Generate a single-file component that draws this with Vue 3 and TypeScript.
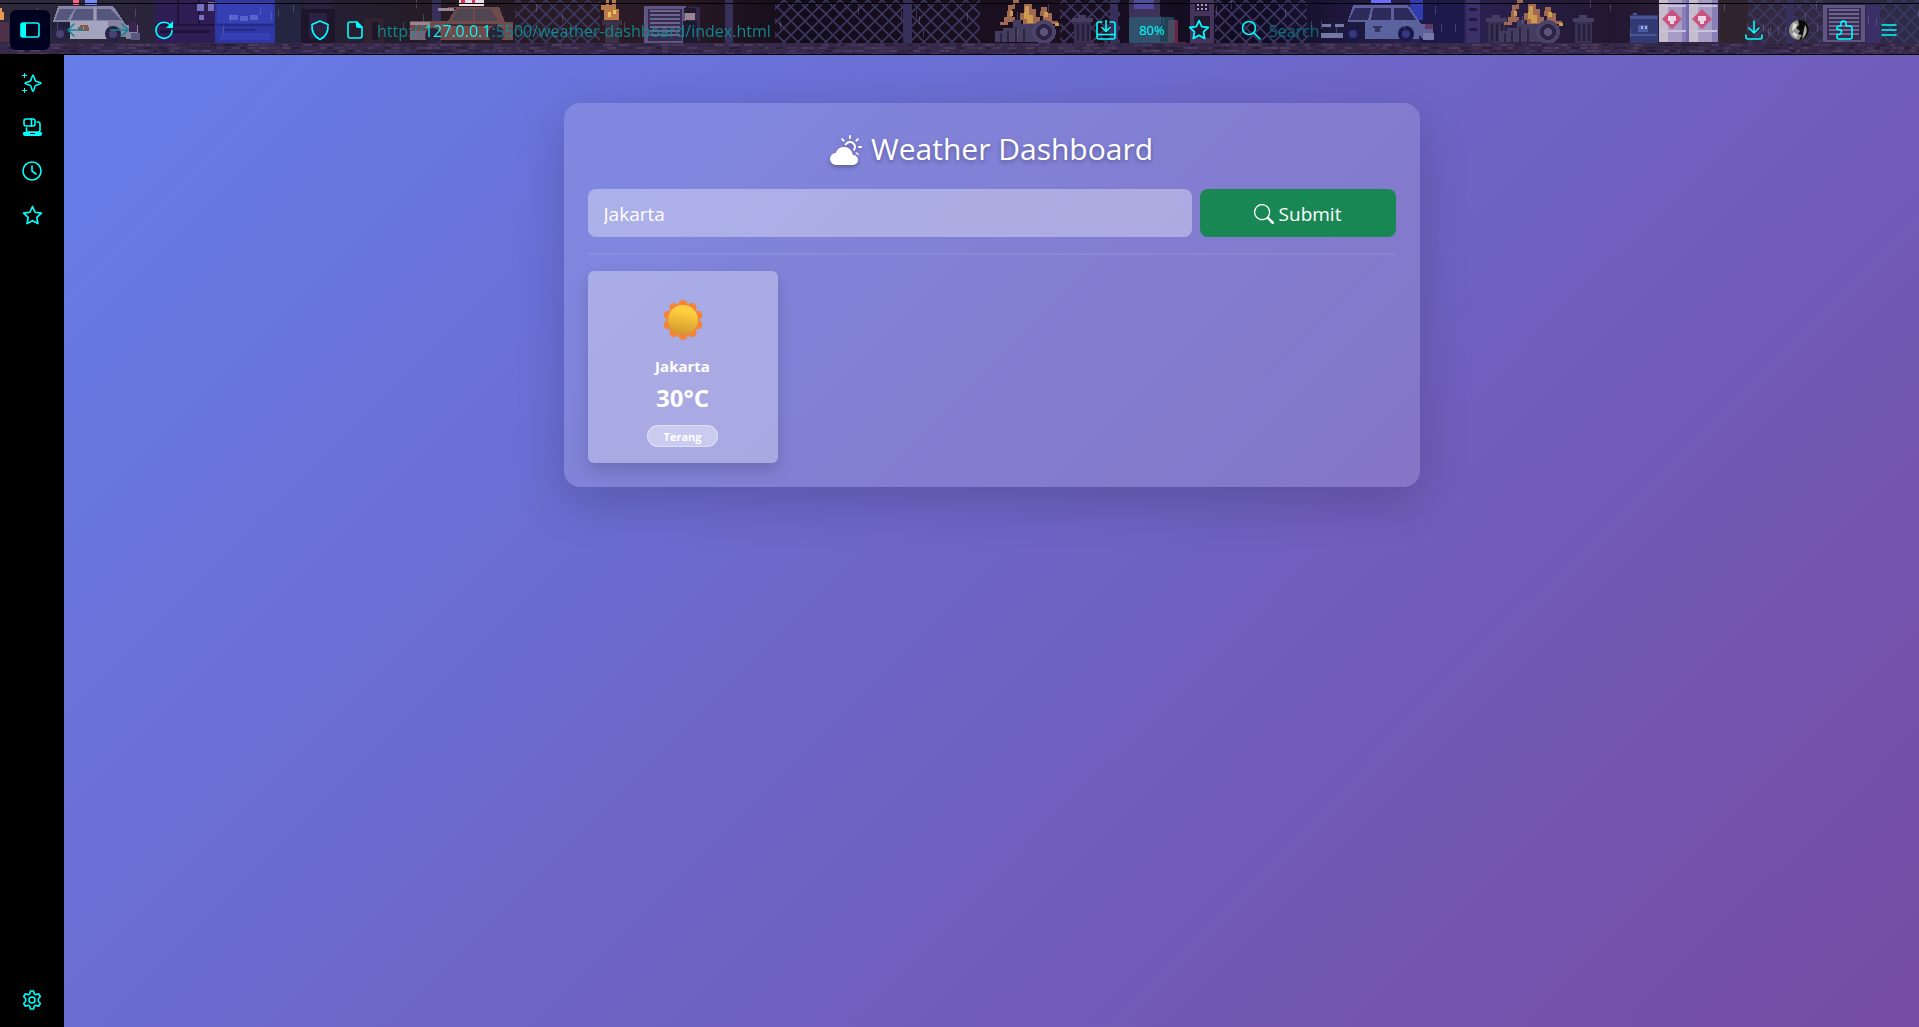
<script setup lang="ts">
import { ref } from 'vue'

interface Weather {
  city: string
  temperature: number
  condition: string
}

interface Block {
  x: number
  y: number
  w: number
  h: number
  c: string
}

const address = ref('http://127.0.0.1:5500/weather-dashboard/index.html')
const webQuery = ref('')
const city = ref('Jakarta')
const results = ref<Weather[]>([{ city: 'Jakarta', temperature: 30, condition: 'Terang' }])

// Paving stones of the street strip, laid out with a small seeded generator.
let seed = 11
const next = (): number => {
  seed = (seed * 16807) % 2147483647
  return seed / 2147483647
}
const tones: string[] = ['#54406b', '#2a1f3b', '#4a3a60', '#201730', '#5b4868']
const paving: Block[] = []
for (let x = 0; x < 1919; x += 6) {
  for (let y = 44; y < 54; y += 3) {
    if (next() > 0.45) {
      paving.push({ x: x + Math.floor(next() * 4), y, w: 4 + Math.floor(next() * 7), h: 2, c: tones[Math.floor(next() * 5)] })
    }
  }
}

const rain: Block[] = []
for (let i = 0; i < 60; i++) {
  rain.push({ x: Math.floor(next() * 1919), y: Math.floor(next() * 30), w: 1, h: 8, c: '#8d8bb0' })
}

const submit = (): void => {
  if (city.value.trim() && results.value[0]) results.value[0].city = city.value.trim()
}
</script>

<template>
  <div class="browser">
    <header class="toolbar">
      <svg class="scene" viewBox="0 0 1919 54" preserveAspectRatio="xMidYMid slice" aria-hidden="true">
        <defs>
          <pattern id="fence" width="14" height="14" patternUnits="userSpaceOnUse">
            <path d="M0 0l14 14M14 0L0 14" stroke="#3b3760" stroke-width="1.6" fill="none" />
          </pattern>
          <linearGradient id="night" x1="0" x2="1" y1="0" y2="0">
            <stop offset="0" stop-color="#2f293c" />
            <stop offset="0.15" stop-color="#25213a" />
            <stop offset="0.22" stop-color="#241c26" />
            <stop offset="0.35" stop-color="#2a1a25" />
            <stop offset="0.42" stop-color="#120c1a" />
            <stop offset="0.54" stop-color="#1c1020" />
            <stop offset="0.66" stop-color="#110c24" />
            <stop offset="0.75" stop-color="#2d2458" />
            <stop offset="0.84" stop-color="#221730" />
            <stop offset="0.9" stop-color="#33283d" />
            <stop offset="1" stop-color="#2c2b48" />
          </linearGradient>
          <g id="car" shape-rendering="crispEdges">
            <path d="M30 0h54l4 4l10 15h12v14h-12v-2H24V19z" />
          </g>
          <g id="fire" shape-rendering="crispEdges">
            <path d="M10 2h5v-5h6v4h-4v5h-3v8h3v5h-7v3H2v-3h4v-5h3zM26 0h8v6h4v8h4v8h-5v4h-5v-3h-7v-6h-3v-7h4zM43 4h6v6h5v8h6v3h-8v-3h-7v-5h-3z" fill="#a06a52" />
            <path d="M12 8h3v5h-3zM27 3h4v9h4v8h-6v-4h-3zM46 9h4v5h-4zM8 32h4v4H8zM41 26h3v4h-3zM57 20h4v3h-4z" fill="#cd9c50" />
            <path d="M-3 28h8v-3h10v-8h8v4h20v6h6v12H-3z" fill="#453d60" />
            <path d="M2 30h2v9H2zM9 28h2v11H9zM17 24h2v15h-2zM25 26h2v13h-2z" fill="#2c2542" />
            <circle cx="46" cy="29" r="12" fill="#4b4369" />
            <circle cx="46" cy="29" r="8" fill="#2c2442" />
            <circle cx="46" cy="29" r="4" fill="#5d5279" />
          </g>
          <g id="bin" shape-rendering="crispEdges">
            <path d="M0 3h6V0h8v3h7v4H0z" fill="#453d62" />
            <path d="M2 7h17v21H2z" fill="#373052" />
            <path d="M5 9h2v17H5zM10 9h2v17h-2zM15 9h2v17h-2z" fill="#241e38" />
          </g>
          <g id="shutter" shape-rendering="crispEdges">
            <path d="M0 0h42v37H0z" fill="#5f5683" />
            <path d="M4 3h34v32H4z" fill="#352c4e" />
            <path d="M6 4h30v2H6zM6 8h30v2H6zM6 12h30v2H6zM6 16h30v2H6zM6 20h30v2H6zM6 24h30v2H6zM6 28h30v2H6z" fill="#6e6492" />
          </g>
        </defs>
        <rect width="1919" height="54" fill="url(#night)" />

        <g shape-rendering="crispEdges">
          <path d="M0 22h9v20H0z" fill="#4c3149" />
          <path d="M0 8h2v4h2v8H0z" fill="#e69a55" />
          <path d="M155 0h60v43h-60z" fill="#2f1d55" />
          <path d="M155 24h60v2h-60zM177 0h2v24h-2zM198 0h2v24h-2zM160 30h50v3h-50z" fill="#1d1338" />
          <path d="M197 3h7v8h-7zM208 2h6v9h-6zM199 15h5v5h-5z" fill="#7772c0" />
          <path d="M215 0h60v43h-60z" fill="#2f37a4" />
          <path d="M217 2h56v21h-56zM220 33h50v7h-50z" fill="#3540b5" />
          <path d="M216 24h58v2h-58zM225 29h30v2h-30z" fill="#252a82" />
          <path d="M229 15h9v5h-9zM240 16h8v5h-8zM250 15h8v5h-8z" fill="#5962c8" />
          <path d="M275 0h26v43h-26z" fill="#242540" />
          <path d="M301 9h34v34h-34z" fill="#1d1529" />
          <path d="M305 0h26v9h-26zM309 13h18v26h-18z" fill="#2b2140" />
          <path d="M364 18h20v25h-20z" fill="#2f2231" />
          <path d="M372 22h6v18h-6z" fill="#1f1728" />
        </g>

        <path d="M515 0h85v43h-85zM775 0h205v43h-205zM1060 0h60v43h-60zM1215 0h92v43h-92zM1745 0h80v43h-80zM1880 0h39v43h-39z" fill="url(#fence)" />
        <path d="M432 0h9v43h-9zM725 0h8v43h-8zM903 0h9v43h-9zM1110 0h8v43h-8zM1786 0h8v43h-8z" fill="#37305a" shape-rendering="crispEdges" />

        <!-- patrol car, left -->
        <g shape-rendering="crispEdges">
          <path d="M73 0h6v5h-6z" fill="#ff5e86" />
          <path d="M85 0h12v5H85z" fill="#718bff" />
          <use href="#car" x="28" y="6" fill="#8584a5" />
          <path d="M60 9h14l-6 11H55zM76 9h17v11H71zM97 9h14l10 11H97z" fill="#55567b" />
          <path d="M94 7h2v14h-2z" fill="#9c9bb8" />
          <path d="M70 21h38v18H70z" fill="#a3a4bd" />
          <path d="M52 22h18v16H52z" fill="#222039" />
          <path d="M80 25h8v2h-8zM78 27h5v4h-5zM84 27h5v4h-5z" fill="#8d5548" />
          <path d="M131 33h9v7h-9z" fill="#585880" />
          <path d="M129 22h8v10h-8z" fill="#392650" />
        </g>
        <circle cx="60" cy="34" r="8" fill="#282247" /><circle cx="60" cy="34" r="4" fill="#474270" />
        <circle cx="113" cy="34" r="8" fill="#282247" /><circle cx="113" cy="34" r="4" fill="#474270" />

        <!-- taxi -->
        <g shape-rendering="crispEdges">
          <path d="M459 0h25v6h-25z" fill="#eadbe8" />
          <path d="M461 0h4v3h-4zM472 0h3v3h-3z" fill="#dc3153" />
          <path d="M439 7h60l6 15h8v18H410V21h38l8-13z" fill="#714b4c" />
          <path d="M458 9h15v12h-22zM475 9h16l7 12h-23z" fill="#504652" />
          <path d="M438 8h16v3h-16zM410 22h20v3h-20z" fill="#9b8592" />
          <path d="M448 24h50v2h-50z" fill="#3c2d36" />
          <path d="M410 31h18v9h-18z" fill="#776477" />
        </g>
        <circle cx="433" cy="36" r="8" fill="#2a2239" /><circle cx="496" cy="34" r="8" fill="#2a2239" />

        <!-- brazier, shutter, passer-by -->
        <g shape-rendering="crispEdges">
          <path d="M602 20h20v5h-3v18h-14V25h-3z" fill="#3e3044" />
          <path d="M606 0h3v5h3V0h4v9h3v11h-15V10h-3V5h5z" fill="#b97b4b" />
          <path d="M608 12h3v5h-3zM613 10h3v4h-3z" fill="#edc05b" />
          <use href="#shutter" x="644" y="6" />
          <path d="M688 7h12v34h-12z" fill="#33284e" />
          <path d="M685 10h10v10h-10z" fill="#9a8490" />
          <path d="M684 8h12v5h-12zM683 21h14v22h-14z" fill="#1d192f" />
        </g>

        <use href="#fire" x="998" y="3" />
        <use href="#bin" x="1072" y="15" />

        <!-- doors and hydrant -->
        <g shape-rendering="crispEdges">
          <path d="M1129 0h31v43h-31z" fill="#3d3257" />
          <path d="M1134 0h20v9h-20z" fill="#514aa0" />
          <path d="M1190 0h24v43h-24z" fill="#45345c" />
          <path d="M1195 3h14v8h-14zM1194 16h16v22h-16z" fill="#211931" />
          <path d="M1197 4h2v2h-2zM1201 4h2v2h-2zM1205 4h2v2h-2zM1197 8h2v2h-2zM1201 8h2v2h-2zM1205 8h2v2h-2z" fill="#a99bc8" />
          <path d="M1159 42h27v12h-27zM1168 20h10v22h-10z" fill="#6b2340" />
          <path d="M1166 45h3v9h-3zM1176 45h3v9h-3z" fill="#3e1730" />
        </g>

        <!-- patrol car, right -->
        <g shape-rendering="crispEdges">
          <path d="M1420 0h44v43h-44z" fill="#1d1a4b" />
          <path d="M1371 0h20v4h-20z" fill="#6b6bff" />
          <path d="M1410 0h13v20h-13z" fill="#2f3db0" />
          <use href="#car" x="1323" y="5" fill="#5d609c" />
          <path d="M1355 8h16l-3 12h-19zM1373 8h18v12h-20zM1394 8h14l8 12h-22z" fill="#2c2b5b" />
          <path d="M1365 21h54v18h-54z" fill="#5b639e" />
          <path d="M1328 22h37v16h-37z" fill="#1c1b3d" />
          <path d="M1322 24h9v3h-9zM1335 24h9v3h-9zM1321 33h22v5h-22zM1423 33h11v7h-11z" fill="#7378a8" />
          <path d="M1373 26h9v2h-9zM1375 28h5v4h-5z" fill="#34315b" />
          <path d="M1425 24h8v5h-8z" fill="#60355f" />
        </g>
        <circle cx="1353" cy="34" r="8" fill="#1a1947" /><circle cx="1353" cy="34" r="4" fill="#36377c" />
        <circle cx="1406" cy="34" r="8" fill="#1a1947" /><circle cx="1406" cy="34" r="4" fill="#36377c" />

        <g shape-rendering="crispEdges">
          <path d="M1466 0h14v43h-14z" fill="#3b3068" />
          <path d="M1469 8h8v3h-8zM1469 18h8v3h-8zM1469 28h8v3h-8z" fill="#211a44" />
        </g>
        <use href="#bin" x="1486" y="15" />
        <use href="#fire" x="1502" y="3" />
        <use href="#bin" x="1573" y="15" />

        <!-- mailbox and vending machines -->
        <g shape-rendering="crispEdges">
          <path d="M1630 15h28v28h-28z" fill="#323a74" />
          <path d="M1633 13h4v2h-4zM1630 16h27v3h-27zM1630 34h27v2h-27z" fill="#4a5595" />
          <path d="M1638 25h10v7h-10z" fill="#4a5aa5" />
          <path d="M1641 26h2v3h-2zM1645 26h2v3h-2z" fill="#9fb0dc" />
          <path d="M1659 0h59v42h-59z" fill="#877fb6" />
          <path d="M1659 0h12v42h-12zM1688 0h12v42h-12z" fill="#c5bccd" />
          <path d="M1668 0h14v42h-14zM1698 0h14v42h-14z" fill="#a79cc6" />
          <path d="M1660 30h57v2h-57zM1660 5h57v2h-57z" fill="#cbc1da" />
          <path d="M1686 0h3v42h-3z" fill="#766cb0" />
          <path d="M1720 0h28v43h-28z" fill="#30242f" />
          <use href="#shutter" x="1823" y="5" />
          <path d="M1866 5h14v38h-14z" fill="#3a2f66" />
        </g>
        <path d="M1672 9l10 10-10 10-10-10zM1702 9l10 10-10 10-10-10z" fill="#c9527f" />
        <path d="M1668 16h8v5h-2v3h-4v-3h-2zM1698 16h8v5h-2v3h-4v-3h-2z" fill="#ead5e6" shape-rendering="crispEdges" />

        <g opacity="0.35" shape-rendering="crispEdges">
          <rect v-for="(drop, i) in rain" :key="i" :x="drop.x" :y="drop.y" :width="drop.w" :height="drop.h" :fill="drop.c" />
        </g>
        <g shape-rendering="crispEdges">
          <rect y="43" width="1919" height="11" fill="#36294a" />
          <rect v-for="(stone, i) in paving" :key="i" :x="stone.x" :y="stone.y" :width="stone.w" :height="stone.h" :fill="stone.c" opacity="0.6" />
          <rect y="3" width="1919" height="1" fill="#000" />
        </g>
      </svg>

      <nav class="nav" aria-label="Navigation">
        <button class="tool toggle" type="button" aria-label="Sidebar">
          <svg width="22" height="18" viewBox="0 0 22 18"><rect x="2" y="2" width="18" height="14" rx="2" class="line" /><path d="M2 2h5v14H2z" fill="currentColor" /></svg>
        </button>
        <button class="tool dim" type="button" aria-label="Back">
          <svg width="20" height="20" viewBox="0 0 20 20"><path class="line" d="M19 10H2M8 4l-6 6 6 6" /></svg>
        </button>
        <button class="tool dim" type="button" aria-label="Forward">
          <svg width="20" height="20" viewBox="0 0 20 20"><path class="line" d="M1 10h17M12 4l6 6-6 6" /></svg>
        </button>
        <button class="tool" type="button" aria-label="Reload">
          <svg width="20" height="20" viewBox="0 0 20 20"><path class="line" d="M17.500 7.500A8 8 0 1 0 18 10.500" /><path d="M19 1v7h-7z" fill="currentColor" /></svg>
        </button>
      </nav>

      <div class="address">
        <button class="mini" type="button" aria-label="Protection">
          <svg width="20" height="22" viewBox="0 0 20 22"><path class="line" d="M10 2l8 3.500c.5 6-2 12-8 15-6-3-8.500-9-8-15z" /></svg>
        </button>
        <button class="mini" type="button" aria-label="Page information">
          <svg width="18" height="20" viewBox="0 0 18 20"><path class="line" d="M11 2H4a2 2 0 0 0-2 2v12a2 2 0 0 0 2 2h10a2 2 0 0 0 2-2V7z" /><path d="M10 1l7 7h-5a2 2 0 0 1-2-2z" fill="currentColor" /></svg>
        </button>
        <input v-model="address" class="url" type="text" aria-label="Address" spellcheck="false" />
        <button class="mini wide" type="button" aria-label="Save page">
          <svg width="22" height="20" viewBox="0 0 22 20"><path class="line" d="M7 2H4a2 2 0 0 0-2 2v13a2 2 0 0 0 2 2h14a2 2 0 0 0 2-2V4a2 2 0 0 0-2-2h-3M2 14.500h18M11 0v11M7 7.500l4 4 4-4" /></svg>
        </button>
        <button class="zoom" type="button">80%</button>
        <button class="mini widest" type="button" aria-label="Bookmark">
          <svg width="22" height="22" viewBox="0 0 20 20"><path class="line" d="M10 1.500l2.500 5.400 6 .8-4.400 4.100 1.100 5.900L10 14.900l-5.200 2.800 1.100-5.900L1.500 7.700l6-.8z" /></svg>
        </button>
      </div>

      <label class="websearch">
        <svg width="20" height="20" viewBox="0 0 20 20"><circle cx="8" cy="8" r="6.500" class="line" /><path class="line" d="M13 13l6 6" /></svg>
        <input v-model="webQuery" type="text" placeholder="Search" aria-label="Search the web" />
      </label>

      <div class="extras">
        <button class="tool" type="button" aria-label="Downloads">
          <svg width="18" height="20" viewBox="0 0 18 20"><path class="line" d="M9 1v12M4 8l5 5 5-5M1 15v2a2 2 0 0 0 2 2h12a2 2 0 0 0 2-2v-2" /></svg>
        </button>
        <button class="tool" type="button" aria-label="Profile">
          <svg width="20" height="20" viewBox="0 0 20 20"><circle cx="10" cy="10" r="10" fill="#8f918f" /><path d="M9 0c7-1 11 5 11 10 0 6-5 10-10 10l3-5-4-1 2-3-4-3 3-3z" fill="#0b0b0b" /><path d="M4 3l4 1-1 4-4 3zM5 12l4 3-2 3-4-4z" fill="#d8dad6" /><path d="M16 5c3 4 2 10-3 14l1-5z" fill="#a9aba7" /></svg>
        </button>
        <button class="tool" type="button" aria-label="Extensions">
          <svg width="20" height="22" viewBox="0 0 20 22"><path class="line" d="M7 7V4.500a2.500 2.500 0 0 1 5 0V7h4a2 2 0 0 1 2 2v9a2 2 0 0 1-2 2H5a2 2 0 0 1-2-2v-2.500h2a2.500 2.500 0 0 0 0-5H3V9a2 2 0 0 1 2-2z" /></svg>
        </button>
        <button class="tool" type="button" aria-label="Menu">
          <svg width="16" height="14" viewBox="0 0 16 14"><path class="line" d="M1 2h14M1 7h14M1 12h14" /></svg>
        </button>
      </div>
    </header>

    <div class="body">
      <aside class="sidebar">
        <button class="side" type="button" aria-label="Assistant">
          <svg width="20" height="20" viewBox="0 0 20 20"><path class="line" d="M11 2c1 0 1.500 5 2.500 6s5.500 1.200 5.500 2.200-4.500 1.300-5.500 2.300-1.500 6-2.500 6-1.500-5-2.500-6-5.500-1.300-5.500-2.300S7.500 9 8.500 8 10 2 11 2z" /><path class="thin" d="M2.500 0v5M0 2.500h5M2.500 15v5M0 17.500h5" /></svg>
        </button>
        <button class="side" type="button" aria-label="Synced tabs">
          <svg width="20" height="20" viewBox="0 0 20 20"><rect x="2" y="2" width="11" height="7" rx="2" class="line" /><path class="line" d="M9.500 2v7M4.500 11v4M15 5h1a2 2 0 0 1 2 2v6a2 2 0 0 1-2 2H5" /><path d="M2 15h17a1 1 0 0 1 1 1v1a2 2 0 0 1-2 2H3a2 2 0 0 1-2-2v-1a1 1 0 0 1 1-1z" fill="currentColor" /><path d="M8 16h5v1H8z" fill="#000" /></svg>
        </button>
        <button class="side" type="button" aria-label="History">
          <svg width="20" height="20" viewBox="0 0 20 20"><circle cx="10" cy="10" r="9" class="line" /><path class="line" d="M10 5v5l4 3" /></svg>
        </button>
        <button class="side" type="button" aria-label="Bookmarks">
          <svg width="21" height="21" viewBox="0 0 20 20"><path class="line" d="M10 1.500l2.500 5.400 6 .8-4.400 4.100 1.100 5.900L10 14.900l-5.200 2.800 1.100-5.900L1.500 7.700l6-.8z" /></svg>
        </button>
        <button class="side last" type="button" aria-label="Settings">
          <svg width="20" height="20" viewBox="0 0 20 20"><circle cx="10" cy="10" r="3" class="line" /><path class="line" d="M8.500 1h3l.7 2.800 1.600 1 2.800-1 1.700 2.700-2 2.200v2.600l2 2.200-1.700 2.700-2.800-1-1.600 1-.7 2.800h-3l-.7-2.800-1.600-1-2.800 1-1.700-2.700 2-2.200V8.700l-2-2.200 1.700-2.700 2.800 1 1.600-1z" /></svg>
        </button>
      </aside>

      <main class="page">
        <section class="panel">
          <h1 class="title">
            <svg width="32" height="32" viewBox="0 0 16 16" fill="currentColor" aria-hidden="true">
              <path d="M11.473 11a4.500 4.500 0 0 0-8.720-.990A3 3 0 0 0 3 16h8.500a2.500 2.500 0 0 0 0-5z" />
              <path d="M10.500 1.500a.5.5 0 0 0-1 0v1a.5.5 0 0 0 1 0zm3.743 1.964a.5.5 0 1 0-.707-.707l-.708.707a.5.5 0 0 0 .708.708zm-7.779-.707a.5.5 0 0 0-.707.707l.707.708a.5.5 0 1 0 .708-.708zm1.734 3.374a2 2 0 1 1 3.296 2.198q.3.423.516.898a3 3 0 1 0-4.840-3.225q.529.017 1.028.129m4.484 4.074c.6.215 1.125.59 1.522 1.072a.5.5 0 0 0 .039-.742l-.707-.707a.5.5 0 0 0-.854.377M14.500 6.500a.5.5 0 0 0 0 1h1a.5.5 0 0 0 0-1z" />
            </svg>
            <span>Weather Dashboard</span>
          </h1>

          <form class="form" @submit.prevent="submit">
            <input v-model="city" class="city" type="text" aria-label="City" />
            <button class="submit" type="submit">
              <svg width="20" height="20" viewBox="0 0 16 16" fill="currentColor" aria-hidden="true"><path d="M11.742 10.344a6.500 6.500 0 1 0-1.397 1.398h-.001q.044.06.098.115l3.850 3.850a1 1 0 0 0 1.415-1.414l-3.850-3.850a1 1 0 0 0-.115-.1zM12 6.500a5.500 5.500 0 1 1-11 0 5.500 5.500 0 0 1 11 0" /></svg>
              <span>Submit</span>
            </button>
          </form>

          <hr class="rule" />

          <div class="cards">
            <article v-for="item in results" :key="item.city" class="card">
              <svg class="sun" width="48" height="48" viewBox="0 0 48 48" aria-hidden="true">
                <defs>
                  <linearGradient id="disc" x1="0.6" y1="0" x2="0.4" y2="1">
                    <stop offset="0.2" stop-color="#ffd03e" />
                    <stop offset="1" stop-color="#cf962d" />
                  </linearGradient>
                  <linearGradient id="rays" gradientUnits="userSpaceOnUse" x1="24" y1="4" x2="24" y2="44">
                    <stop offset="0" stop-color="#fb9232" />
                    <stop offset="1" stop-color="#ee7748" />
                  </linearGradient>
                </defs>
                <g fill="#f58436">
                  <circle cx="24" cy="24" r="16" fill="url(#rays)" />
                  <circle v-for="n in 10" :key="n" cx="24" cy="8.500" r="4.500" :transform="`rotate(${n * 36} 24 24)`" />
                </g>
                <circle cx="24" cy="24" r="15" fill="url(#disc)" />
              </svg>
              <h2 class="name">{{ item.city }}</h2>
              <p class="temp">{{ item.temperature }}°C</p>
              <span class="badge">{{ item.condition }}</span>
            </article>
          </div>
        </section>
      </main>
    </div>
  </div>
</template>

<style>
body {
  margin: 0;
  background: #000;
}
</style>

<style scoped>
.browser {
  display: flex;
  flex-direction: column;
  min-height: 100vh;
  font-family: 'Open Sans', 'Noto Sans', sans-serif;
  color: #fff;
}

button,
input {
  box-sizing: border-box;
  border: 0;
  padding: 0;
  background: none;
  color: inherit;
  font-family: inherit;
}

svg {
  display: block;
  flex: none;
}

.line {
  fill: none;
  stroke: currentColor;
  stroke-width: 1.6;
  stroke-linecap: round;
  stroke-linejoin: round;
}

.thin {
  fill: none;
  stroke: currentColor;
  stroke-width: 1;
}

.toolbar {
  position: relative;
  display: flex;
  align-items: center;
  box-sizing: border-box;
  height: 55px;
  padding: 5px 8px 0 10px;
  border-bottom: 1px solid #000;
  color: #00ffff;
  overflow: hidden;
}

.scene {
  position: absolute;
  inset: 0;
  width: 100%;
  height: 100%;
}

.nav,
.address,
.websearch,
.extras {
  position: relative;
  display: flex;
  align-items: center;
}

.tool {
  display: flex;
  align-items: center;
  justify-content: center;
  width: 44px;
  height: 40px;
}

.toggle {
  width: 40px;
  margin-right: 4px;
  border-radius: 6px;
  background: #00001f;
}

.dim {
  color: #12888f;
}

.address {
  flex: 921;
  margin-left: 116px;
  height: 32px;
}

.mini {
  display: flex;
  align-items: center;
  justify-content: center;
  flex: none;
  width: 35px;
  height: 32px;
}

.wide {
  width: 46px;
}

.widest {
  width: 48px;
}

.url {
  flex: 1;
  min-width: 0;
  margin-left: 5px;
  height: 32px;
  padding-top: 2px;
  font-size: 16px;
  color: #0f8a8f;
  background: linear-gradient(90deg, #0f8a8f 47px, #00ffff 47px, #00ffff 115px, #0f8a8f 115px);
  background-clip: text;
  -webkit-background-clip: text;
  -webkit-text-fill-color: transparent;
}

.zoom {
  width: 46px;
  height: 26px;
  border-radius: 4px;
  background: rgba(40, 110, 125, 0.55);
  font-size: 13px;
}

.websearch {
  flex: 375;
  gap: 8px;
  margin: 0 116px 0 18px;
}

.websearch input {
  flex: 1;
  min-width: 0;
  height: 32px;
  padding-top: 2px;
  font-size: 16px;
}

.websearch input::placeholder {
  color: #0a6b75;
  opacity: 1;
}

.extras {
  gap: 1px;
}

.body {
  display: flex;
  flex: 1;
}

.sidebar {
  display: flex;
  flex-direction: column;
  align-items: center;
  flex: none;
  box-sizing: border-box;
  width: 64px;
  padding: 6px 0 5px;
  background: #000;
  color: #00ffff;
}

.side {
  display: flex;
  align-items: center;
  justify-content: center;
  width: 44px;
  height: 44px;
}

.last {
  margin-top: auto;
}

.page {
  flex: 1;
  padding: 48px 24px;
  background: linear-gradient(135deg, #667eea 0%, #764ba2 100%);
}

.panel {
  box-sizing: border-box;
  max-width: 856px;
  margin: 0 auto;
  padding: 24px;
  border-radius: 16px;
  background: rgba(255, 255, 255, 0.15);
  box-shadow: 0 16px 48px rgba(0, 0, 0, 0.175);
}

.title {
  display: flex;
  align-items: center;
  justify-content: center;
  gap: 9px;
  margin: 0 0 21px;
  padding-top: 3px;
  font-size: 30px;
  font-weight: 400;
  line-height: 38px;
  text-shadow: 0 2px 4px rgba(0, 0, 0, 0.3);
}

.title svg {
  overflow: visible;
  filter: drop-shadow(0 2px 2px rgba(0, 0, 0, 0.3));
}

.form {
  display: flex;
  gap: 8px;
}

.city {
  flex: 1;
  min-width: 0;
  height: 48px;
  padding: 2px 16px 0;
  border-radius: 8px;
  background: rgba(255, 255, 255, 0.35);
  font-size: 19px;
}

.submit {
  display: flex;
  align-items: center;
  justify-content: center;
  gap: 5px;
  width: 196px;
  height: 48px;
  padding-top: 1px;
  border-radius: 8px;
  background: #198754;
  font-size: 19px;
}

.rule {
  height: 2px;
  margin: 16px 0;
  border: 0;
  background: rgba(255, 255, 255, 0.08);
}

.cards {
  display: flex;
  flex-wrap: wrap;
  gap: 16px;
}

.card {
  display: flex;
  flex-direction: column;
  align-items: center;
  box-sizing: border-box;
  width: 190px;
  padding: 25px 16px 16px;
  border-radius: 6px;
  background: rgba(255, 255, 255, 0.32);
  box-shadow: 0 8px 16px rgba(0, 0, 0, 0.15);
}

.name {
  margin: 12px 0 8px;
  font-size: 15px;
  font-weight: 700;
  line-height: 20px;
}

.temp {
  margin: 0 0 13px;
  font-size: 24px;
  font-weight: 700;
  line-height: 28px;
}

.badge {
  box-sizing: border-box;
  padding: 1px 16px 0;
  border: 1px solid rgba(255, 255, 255, 0.4);
  border-radius: 11px;
  background: rgba(255, 255, 255, 0.4);
  font-size: 11px;
  font-weight: 700;
  line-height: 19px;
}
</style>
